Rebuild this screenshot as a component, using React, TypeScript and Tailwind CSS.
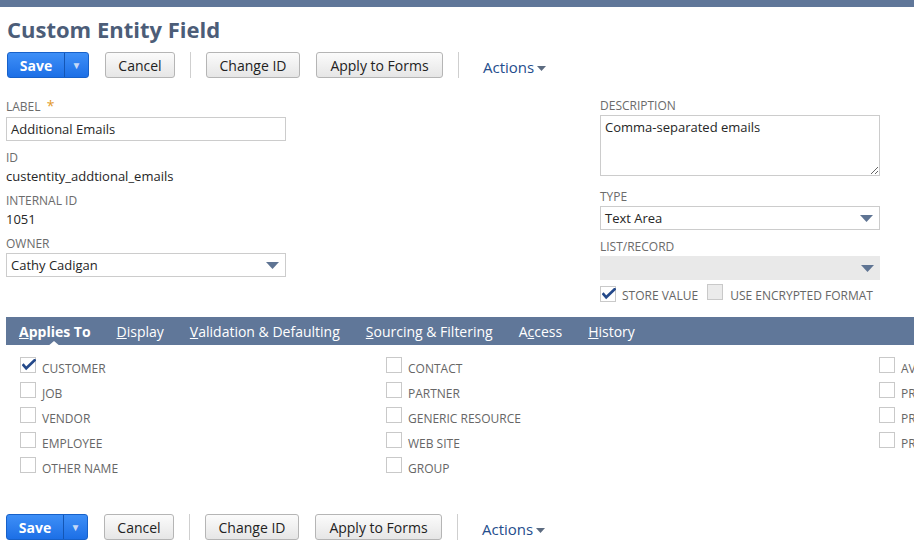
import React from "react";

const font = { fontFamily: '"Open Sans", "Liberation Sans", sans-serif' };

function Caret() {
  return (
    <svg width="13" height="7" viewBox="0 0 13 7" aria-hidden>
      <path d="M0 0h13L6.5 7z" fill="#5f7493" />
    </svg>
  );
}

function Check() {
  return (
    <svg width="14" height="12" viewBox="0 0 14 12" aria-hidden className="absolute left-[1px] top-[1px]">
      <path d="M1.5 6.2 4.2 9.3 12.6 1.2" fill="none" stroke="#24498a" strokeWidth="2.6" strokeLinecap="square" />
    </svg>
  );
}

function Box({ checked, disabled }: { checked?: boolean; disabled?: boolean }) {
  return (
    <span
      className={
        "relative inline-block h-[16px] w-[16px] shrink-0 border border-[#c9c9c9] " +
        (disabled ? "bg-[#ebebeb]" : "bg-white")
      }
    >
      {checked && <Check />}
    </span>
  );
}

function GrayBtn({ label, w }: { label: string; w: string }) {
  return (
    <button
      type="button"
      className={`h-[26px] ${w} rounded-[3px] border border-[#b5b5b5] bg-gradient-to-b from-[#fbfbfb] to-[#e6e6e6] text-[14px] font-normal text-[#222]`}
    >
      {label}
    </button>
  );
}

function ButtonBar() {
  return (
    <div className="flex h-[26px] items-center">
      <div className="flex h-[26px] w-[82px] overflow-hidden rounded-[3px] border border-[#1761c9] bg-gradient-to-b from-[#3e8ff7] to-[#1c6fe6]">
        <span className="flex w-[56px] items-center justify-center text-[14px] font-bold text-white">Save</span>
        <span className="flex flex-1 items-center justify-center border-l border-[#1456b4] text-[10px] text-[#c5d9f7]">
          ▼
        </span>
      </div>
      <div className="ml-[16px]">
        <GrayBtn label="Cancel" w="w-[70px]" />
      </div>
      <span className="mx-[15px] h-[26px] w-px bg-[#cfcfcf]" />
      <GrayBtn label="Change ID" w="w-[94px]" />
      <div className="ml-[16px]">
        <GrayBtn label="Apply to Forms" w="w-[127px]" />
      </div>
      <span className="ml-[15px] h-[26px] w-px bg-[#cfcfcf]" />
      <span className="ml-[24px] mt-[5px] flex items-center gap-[3px] text-[15px] text-[#244d8c]">
        Actions
        <svg width="9" height="5" viewBox="0 0 9 5" aria-hidden className="mt-[2px]">
          <path d="M0 0h9L4.5 5z" fill="#5c6b80" />
        </svg>
      </span>
    </div>
  );
}

function Label({ children }: { children: React.ReactNode }) {
  return <div className="h-4 text-[12px] uppercase leading-4 text-[#6b6b6b]">{children}</div>;
}

function Select({ value, disabled }: { value?: string; disabled?: boolean }) {
  return (
    <div
      className={
        "flex h-[24px] items-center justify-between pl-[4px] pr-[6px] text-[13px] text-[#262626] " +
        (disabled ? "bg-[#e9e9e9]" : "border border-[#cccccc] bg-white")
      }
    >
      <span className="mt-[2px]">{value}</span>
      <Caret />
    </div>
  );
}

function Item({ label, checked }: { label: string; checked?: boolean }) {
  return (
    <div className="flex h-[25px] items-start gap-[6px] whitespace-nowrap">
      <Box checked={checked} />
      <span className="mt-[4px] text-[12px] uppercase leading-4 text-[#666]">{label}</span>
    </div>
  );
}

const tabs = [
  { first: "A", rest: "pplies To", bold: true },
  { first: "D", rest: "isplay" },
  { first: "V", rest: "alidation & Defaulting" },
  { first: "S", rest: "ourcing & Filtering" },
  { first: "A", rest: "ccess", under: 1 },
  { first: "H", rest: "istory" },
];

export default function App() {
  return (
    <div className="h-[554px] w-[914px] overflow-hidden bg-white" style={font}>
      <div className="h-[7px] bg-[#607799]" />
      <div className="pl-[7px]">
        <h1 className="mt-[8px] text-[22px] font-bold leading-[28px] text-[#4c5d78]">Custom Entity Field</h1>
        <div className="mt-[9px]">
          <ButtonBar />
        </div>
      </div>

      <div className="mt-[20px] flex pl-[6px]">
        <div className="w-[280px] shrink-0">
          <Label>
            Label <span className="ml-[3px] text-[14px] text-[#e39a2a]">*</span>
          </Label>
          <div className="mt-[3px] flex h-[24px] items-center border border-[#cccccc] pl-[4px] pt-[2px] text-[13px] text-[#262626]">
            Additional Emails
          </div>
          <div className="mt-[9px]">
            <Label>ID</Label>
          </div>
          <div className="mt-[1px] text-[13px] leading-[18px] text-[#262626]">custentity_addtional_emails</div>
          <div className="mt-[8px]">
            <Label>Internal ID</Label>
          </div>
          <div className="mt-[1px] text-[13px] leading-[18px] text-[#262626]">1051</div>
          <div className="mt-[8px]">
            <Label>Owner</Label>
          </div>
          <div className="mt-[1px]">
            <Select value="Cathy Cadigan" />
          </div>
        </div>

        <div className="ml-[314px] w-[280px] shrink-0">
          <Label>Description</Label>
          <textarea
            readOnly
            defaultValue="Comma-separated emails"
            className="mt-[1px] block h-[61px] w-[280px] border border-[#cccccc] px-[4px] py-[2px] text-[13px] leading-[18px] text-[#262626] outline-none"
          />
          <div className="mt-[13px]">
            <Label>Type</Label>
          </div>
          <div className="mt-[1px]">
            <Select value="Text Area" />
          </div>
          <div className="mt-[9px]">
            <Label>List/Record</Label>
          </div>
          <div className="mt-[1px]">
            <Select disabled />
          </div>
          <div className="mt-[6px] flex h-4 items-center whitespace-nowrap">
            <Box checked />
            <span className="ml-[6px] mt-[3px] text-[12px] uppercase text-[#666]">Store Value</span>
            <span className="ml-[9px]">
              <Box disabled />
            </span>
            <span className="ml-[7px] mt-[3px] text-[12px] uppercase text-[#666]">Use Encrypted Format</span>
          </div>
        </div>
      </div>

      <div className="ml-[6px] mt-[15px] flex h-[28px] items-center gap-[26px] bg-[#607799] pl-[13px] text-[14px] text-white">
        {tabs.map((t, i) => (
          <span key={i} className={"relative whitespace-nowrap " + (t.bold ? "font-bold" : "")}>
            {t.under ? (
              <>
                {t.first}
                <span className="underline">{t.rest[0]}</span>
                {t.rest.slice(1)}
              </>
            ) : (
              <>
                <span className="underline">{t.first}</span>
                {t.rest}
              </>
            )}
            {t.bold && (
              <span className="absolute left-[28px] top-[20px] h-0 w-0 border-x-[7px] border-b-[6px] border-x-transparent border-b-white" />
            )}
          </span>
        ))}
      </div>

      <div className="mt-[12px] flex pl-[20px]">
        <div className="w-[366px] shrink-0">
          <Item label="Customer" checked />
          <Item label="Job" />
          <Item label="Vendor" />
          <Item label="Employee" />
          <Item label="Other Name" />
        </div>
        <div className="w-[493px] shrink-0">
          <Item label="Contact" />
          <Item label="Partner" />
          <Item label="Generic Resource" />
          <Item label="Web Site" />
          <Item label="Group" />
        </div>
        <div className="w-[200px] shrink-0">
          <Item label="Available Offline" />
          <Item label="Project" />
          <Item label="Project Template" />
          <Item label="Prospect" />
        </div>
      </div>

      <div className="mt-[32px] pl-[6px]">
        <ButtonBar />
      </div>
    </div>
  );
}
